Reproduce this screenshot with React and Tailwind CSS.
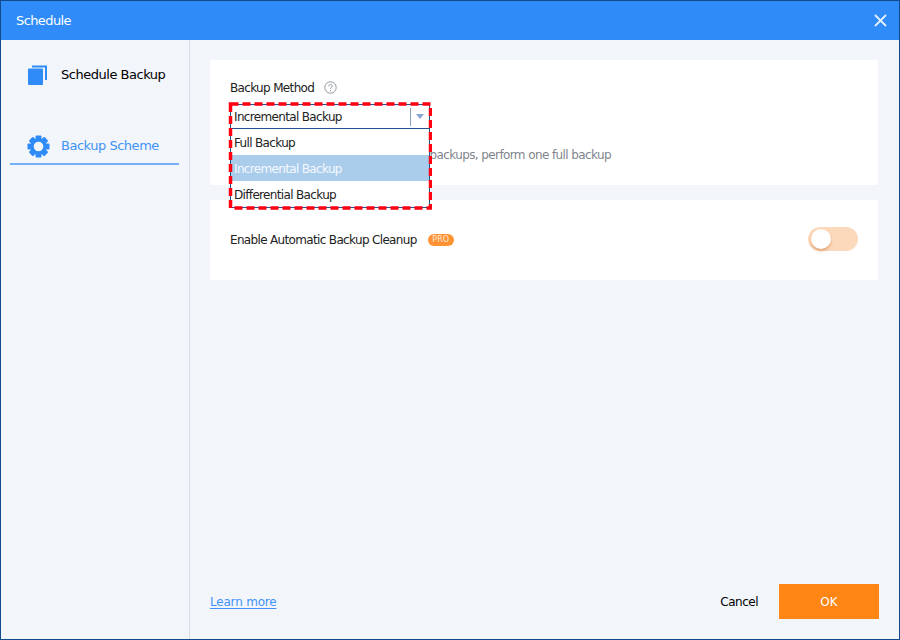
import React from "react";

const font = { fontFamily: '"DejaVu Sans", sans-serif' };

function Stack() {
  return (
    <svg width="20" height="20" viewBox="0 0 20 20" className="shrink-0">
      <rect x="0" y="3.5" width="15" height="16.5" rx="1" fill="#2e8bf7" />
      <path d="M4 1.5H18V15" fill="none" stroke="#2e8bf7" strokeWidth="2" />
    </svg>
  );
}

function Gear() {
  const teeth = [0, 45, 90, 135];
  return (
    <svg width="23" height="23" viewBox="0 0 23 23" className="shrink-0">
      {teeth.map((a) => (
        <rect key={a} x="8.5" y="0.5" width="6" height="22" rx="1" fill="#2e8bf7" transform={`rotate(${a} 11.5 11.5)`} />
      ))}
      <circle cx="11.5" cy="11.5" r="8" fill="#2e8bf7" />
      <circle cx="11.5" cy="11.5" r="4.8" fill="#f2f5fa" />
    </svg>
  );
}

export default function App() {
  return (
    <div
      className="w-[900px] h-[640px] flex flex-col border border-[#0f4a8a] bg-[#f2f5fa] overflow-hidden text-[12px] tracking-[-0.66px]"
      style={font}
    >
      <div className="h-[39px] shrink-0 bg-[#2e8bf7] flex items-center justify-between pl-[15px] pr-[12px] text-white text-[13px] tracking-[-0.6px]">
        <span>Schedule</span>
        <svg width="13" height="13" viewBox="0 0 13 13" stroke="#e3f0ff" strokeWidth="1.8" fill="none">
          <path d="M1 1L12 12M12 1L1 12" />
        </svg>
      </div>
      <div className="flex-1 flex min-h-0">
        <aside className="w-[189px] shrink-0 border-r border-[#d9dde3] pl-[9px] pr-[10px] pt-[25px] text-[13px] tracking-[-0.48px]">
          <div className="flex items-center gap-[13px] pl-[18px] h-[20px] text-black">
            <Stack />
            <span>Schedule Backup</span>
          </div>
          <div className="mt-[47px] h-[33px] border-b-2 border-[#74b0f8] flex items-center gap-[11px] pl-[17px] pb-[3px] text-[#3f93f7]">
            <Gear />
            <span>Backup Scheme</span>
          </div>
        </aside>
        <main className="flex-1 flex flex-col pl-[20px] pr-[21px] pt-[20px] pb-[20px] min-w-0">
          <section className="relative h-[125px] bg-white pl-[20px] pt-[19px]">
            <div className="flex items-center gap-[10px] h-[17px] text-[#222]">
              <span>Backup Method</span>
              <svg width="13" height="13" viewBox="0 0 13 13" fill="none" stroke="#8f959d">
                <circle cx="6.5" cy="6.5" r="5.7" />
                <path d="M4.7 5.2C4.7 3 8.3 3 8.3 5.1C8.3 6.3 6.5 6.3 6.5 7.8" />
                <path d="M6.5 9V10" />
              </svg>
            </div>
            <p className="mt-[50px] w-[381px] text-right text-[#80858d] whitespace-nowrap tracking-[-0.6px]">
              When there are 6 incremental backups, perform one full backup
            </p>
            <div className="absolute left-[20px] top-[44px] w-[200px] h-[104px] border border-[#23518f] bg-white z-10 flex flex-col text-[#222]">
              <div className="h-[24px] shrink-0 flex items-center justify-between pl-[3px] border-b border-[#23518f]">
                <span>Incremental Backup</span>
                <span className="flex items-center h-[18px] border-l border-[#8aa0c0] pl-[5px] pr-[4px] mr-[1px]">
                  <span className="w-0 h-0 border-x-[4px] border-x-transparent border-t-[5px] border-t-[#8aa6d0]" />
                </span>
              </div>
              <div className="h-[26px] shrink-0 flex items-center pl-[3px] pt-[2px]">Full Backup</div>
              <div className="h-[26px] shrink-0 flex items-center pl-[3px] pt-[2px] bg-[#abcdec] text-[#f5f8fc]">Incremental Backup</div>
              <div className="h-[26px] shrink-0 flex items-center pl-[3px] pt-[2px]">Differential Backup</div>
              <svg width="204" height="108" className="absolute left-[-3px] top-[-3px] pointer-events-none">
                <rect x="2.5" y="2" width="200" height="104" fill="none" stroke="#ff0010" strokeWidth="3.5" strokeDasharray="8 4" />
              </svg>
            </div>
          </section>
          <section className="mt-[15px] h-[80px] bg-white flex items-center justify-between pl-[20px] pr-[20px]">
            <div className="flex items-center gap-[11px] text-[#222]">
              <span>Enable Automatic Backup Cleanup</span>
              <span className="w-[26px] h-[12px] rounded-full bg-[#ff9233] text-[#ffe9d6] text-[8px] tracking-normal flex items-center justify-center">
                PRO
              </span>
            </div>
            <div className="w-[50px] h-[24px] mb-[2px] rounded-full bg-[#fdd9bb] flex items-center pl-[3px]">
              <span className="w-[20px] h-[20px] rounded-full bg-white shadow-[0_2px_3px_rgba(200,130,70,0.6)]" />
            </div>
          </section>
          <div className="mt-auto mr-[-1px] flex items-center justify-between">
            <a className="text-[#3f93f7] tracking-[-0.2px] underline underline-offset-2">Learn more</a>
            <div className="flex items-center gap-[21px]">
              <span className="text-black tracking-[-0.5px]">Cancel</span>
              <button className="w-[100px] h-[35px] bg-[#ff8514] text-white tracking-normal">OK</button>
            </div>
          </div>
        </main>
      </div>
    </div>
  );
}
